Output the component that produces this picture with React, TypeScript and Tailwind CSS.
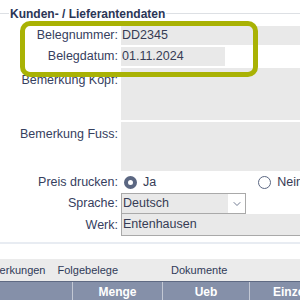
import { ChevronDown } from "lucide-react";

const labelCls = "text-right text-[12.5px] leading-[19px] text-[#36405e]";
const fieldCls = "bg-[#e9e9e9] text-[12.5px] leading-[19px] text-[#363c55] pl-[1px]";

export default function App() {
  return (
    <div className="relative w-[300px] h-[300px] overflow-hidden bg-white font-['Liberation_Sans',Arial,sans-serif]">
      {/* Legend */}
      <div className="flex items-center h-[26px] pt-[1px]">
        <div className="w-[9px] h-px bg-[#dde0e4]" />
        <span className="px-[1px] text-[12px] font-bold text-[#2b3656]">
          Kunden- / Lieferantendaten
        </span>
        <div className="flex-1 h-px bg-[#dde0e4]" />
      </div>

      {/* Form */}
      <div className="grid grid-cols-[118px_1fr] gap-x-[3px]">
        <div className={labelCls}>Belegnummer:</div>
        <div className={fieldCls + " h-[19px]"}>DD2345</div>

        <div className={labelCls + " mt-[2px]"}>Belegdatum:</div>
        <div className="mt-[2px]">
          <div className={fieldCls + " h-[19px] w-[104px]"}>01.11.2024</div>
        </div>

        <div className={labelCls + " mt-[2px] pt-[3px]"}>Bemerkung Kopf:</div>
        <div className="mt-[2px] h-[52px] bg-[#e9e9e9]" />

        <div className={labelCls + " mt-[2px] pt-[3px]"}>Bemerkung Fuss:</div>
        <div className="mt-[2px] h-[49px] bg-[#e9e9e9]" />

        <div className={labelCls + " h-[22px] leading-[22px]"}>Preis drucken:</div>
        <div className="h-[22px] flex items-center text-[12.5px] text-[#363c55]">
          <span className="shrink-0 ml-[3px] w-[13px] h-[13px] rounded-full border-[4px] border-[#5b6782] bg-white" />
          <span className="ml-[6px]">Ja</span>
          <span className="shrink-0 ml-[102px] w-[13px] h-[13px] rounded-full border border-[#5b6782] bg-white" />
          <span className="ml-[6px] whitespace-nowrap">Nein</span>
        </div>

        <div className={labelCls + " h-[21px] leading-[21px]"}>Sprache:</div>
        <div className="flex h-[21px] w-[125px] border border-[#a9a9a9]">
          <div className={fieldCls + " flex-1 leading-[19px]"}>Deutsch</div>
          <div className="w-[17px] bg-white flex items-center justify-center">
            <ChevronDown className="w-[12px] h-[12px] text-[#5b6782]" strokeWidth={1.75} />
          </div>
        </div>

        <div className={labelCls + " h-[22px] leading-[22px]"}>Werk:</div>
        <div className={fieldCls + " h-[22px] leading-[20px] border border-t-0 border-r-0 border-[#a9a9a9]"}>
          Entenhausen
        </div>
      </div>

      {/* Divider */}
      <div className="mt-[6px] h-[2px] bg-[#e8ecf2]" />

      {/* Tabs */}
      <div className="mt-[15px] h-[22px] bg-[#ebebeb] flex items-center text-[11px] text-[#2f3a58] whitespace-nowrap">
        <span className="shrink-0 -ml-[23px]">Bemerkungen</span>
        <span className="shrink-0 ml-[12px]">Folgebelege</span>
        <span className="shrink-0 ml-[53px]">Dokumente</span>
      </div>

      {/* Table header */}
      <div className="h-px bg-[#5f6a83]" />
      <div className="flex h-[20px] bg-[#8590a9] text-white font-bold text-[12px] leading-[20px] whitespace-nowrap">
        <div className="shrink-0 w-[73px] border-r border-[#c3c8d4]" />
        <div className="shrink-0 w-[90px] text-center border-r border-[#c3c8d4]">Menge</div>
        <div className="shrink-0 w-[87px] text-center border-r border-[#c3c8d4]">Ueb</div>
        <div className="shrink-0 pl-[23px]">Einzelpreis</div>
      </div>

      {/* Highlight frame */}
      <div className="absolute left-[20px] top-[21px] w-[238px] h-[56px] rounded-[10px] border-[5px] border-[#a9b204]" />
    </div>
  );
}
